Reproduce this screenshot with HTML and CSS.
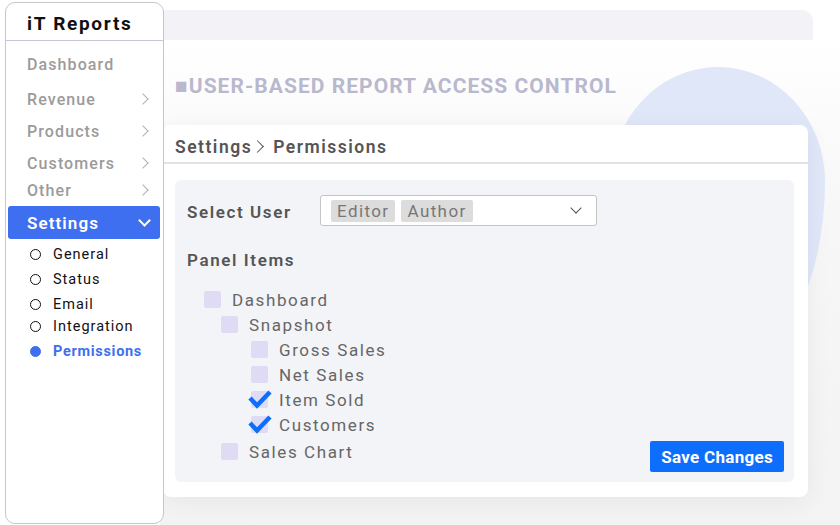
FILE: index.html
```html
<!DOCTYPE html>
<html>

<head>
    <title>iT Reports - Permissions</title>
    <link rel="stylesheet" href="styles.css">
</head>

<body>
    <div class="app">
        <aside class="sidebar">
            <div class="brand">iT Reports</div>
            <nav class="menu">
                <a class="menu-item m-dash">Dashboard</a>
                <a class="menu-item m-rev">Revenue <span class="chev"></span></a>
                <a class="menu-item m-prod">Products <span class="chev"></span></a>
                <a class="menu-item m-cust">Customers <span class="chev"></span></a>
                <a class="menu-item m-other">Other <span class="chev"></span></a>
                <a class="menu-item active">Settings <span class="chev down"></span></a>
                <ul class="submenu">
                    <li class="s-gen">General</li>
                    <li class="s-stat">Status</li>
                    <li class="s-mail">Email</li>
                    <li class="s-int">Integration</li>
                    <li class="s-perm current">Permissions</li>
                </ul>
            </nav>
        </aside>

        <main class="main">
            <div class="topbar"></div>
            <div class="stage">
                <div class="blob"></div>
                <h1 class="page-title">&#9632;USER-BASED REPORT ACCESS CONTROL</h1>

                <section class="card">
                    <div class="card-head">Settings<span class="crumb-sep"></span>Permissions</div>
                    <div class="panel">
                        <div class="field">
                            <label class="field-label">Select User</label>
                            <div class="select">
                                <span class="tag">Editor</span>
                                <span class="tag">Author</span>
                                <span class="select-caret"></span>
                            </div>
                        </div>

                        <h3 class="field-label items-title">Panel Items</h3>

                        <ul class="tree">
                            <li class="lvl0"><span class="box"></span>Dashboard</li>
                            <li class="lvl1"><span class="box"></span>Snapshot</li>
                            <li class="lvl2"><span class="box"></span>Gross Sales</li>
                            <li class="lvl2"><span class="box"></span>Net Sales</li>
                            <li class="lvl2"><span class="box">
                                <svg class="tick" width="23" height="19" viewBox="0 0 23 19"><polyline points="1,8 8,15.5 21,2" /></svg>
                            </span>Item Sold</li>
                            <li class="lvl2"><span class="box">
                                <svg class="tick" width="23" height="19" viewBox="0 0 23 19"><polyline points="1,8 8,15.5 21,2" /></svg>
                            </span>Customers</li>
                        </ul>
                        <div class="panel-foot">
                            <div class="tree-row lvl1"><span class="box"></span>Sales Chart</div>
                            <button class="save-btn">Save Changes</button>
                        </div>
                    </div>
                </section>
            </div>
        </main>
    </div>
</body>

</html>
```

FILE: styles.css
```css
* {
    box-sizing: border-box;
}

body {
    margin: 0;
    font-family: 'Roboto', sans-serif;
    background-color: #fff;
    color: #333;
    overflow: hidden;
}

.app {
    display: flex;
    height: 525px;
    padding-top: 2px;
}

/* sidebar */

.sidebar {
    position: relative;
    z-index: 2;
    width: 159px;
    height: 522px;
    margin-left: 5px;
    flex-shrink: 0;
    background-color: #fff;
    border: 1.5px solid #c6c6c8;
    border-radius: 10px;
}

.brand {
    height: 38px;
    padding: 9px 0 0 21px;
    font-size: 19px;
    font-weight: 700;
    letter-spacing: 1.7px;
    color: #111;
    border-bottom: 1.5px solid #c7c7d6;
}

.menu {
    display: flex;
    flex-direction: column;
}

.menu-item {
    display: flex;
    align-items: center;
    justify-content: space-between;
    height: 24px;
    padding: 0 14px 0 21px;
    font-size: 16px;
    font-weight: 500;
    letter-spacing: 1.1px;
    color: #9b9b9b;
}

.m-dash { margin-top: 11px; }
.m-rev { margin-top: 11px; }
.m-prod { margin-top: 8px; }
.m-cust { margin-top: 8px; }
.m-other { margin-top: 3px; }

.chev {
    width: 8px;
    height: 8px;
    border-right: 1.5px solid #b0b0b0;
    border-top: 1.5px solid #b0b0b0;
    transform: rotate(45deg);
    margin-right: 2px;
}

.menu-item.active {
    height: 33px;
    margin: 4px 3.5px 0 2px;
    padding: 0 7px 0 19px;
    background-color: #3e6ff1;
    border-radius: 3px;
    color: #fff;
    font-weight: 600;
    font-size: 17px;
}

.chev.down {
    width: 9px;
    height: 9px;
    border-color: #fff;
    border-width: 2px;
    transform: rotate(135deg);
    margin: -5px 4px 0 0;
}

.submenu {
    list-style: none;
    margin: 5px 0 0 0;
    padding: 0 0 0 24px;
}

.submenu li {
    display: flex;
    align-items: center;
    gap: 12px;
    height: 20px;
    font-size: 14.5px;
    font-weight: 400;
    letter-spacing: 1px;
    color: #111;
}

.submenu li::before {
    content: "";
    width: 9px;
    height: 9px;
    border: 1.6px solid #111;
    border-radius: 50%;
}

.submenu .s-stat { margin-top: 5px; }
.submenu .s-mail { margin-top: 5px; }
.submenu .s-int { margin-top: 2px; }
.submenu .s-perm { margin-top: 5px; }

.submenu li.current {
    color: #3e6ff1;
    font-weight: 700;
    letter-spacing: 0.7px;
}

.submenu li.current::before {
    background-color: #3e6ff1;
    border-color: #3e6ff1;
}

/* main area */

.main {
    flex: 1;
    margin-left: -4px;
    padding-top: 8px;
    display: flex;
    flex-direction: column;
}

.topbar {
    height: 30px;
    margin-right: 27px;
    background-color: #f3f3f7;
    border-top-right-radius: 11px;
}

.stage {
    position: relative;
    flex: 1;
    background: linear-gradient(180deg, #ffffff 0%, #f7f7f8 35%, #f3f3f4 100%);
}

.blob {
    position: absolute;
    left: 451px;
    top: 27px;
    width: 214px;
    height: 300px;
    background-color: #dfe7f8;
    border-radius: 50% 50% 45% 45% / 38% 38% 62% 62%;
}

.page-title {
    position: relative;
    margin: 34px 0 0 15px;
    font-size: 21px;
    font-weight: 700;
    letter-spacing: 1.05px;
    color: #b9b8cd;
}

.card {
    position: relative;
    width: 645px;
    margin: 27px 0 0 3px;
    background-color: #fff;
    border-radius: 8px;
    box-shadow: 0 4px 24px rgba(0, 0, 0, 0.06);
    padding-bottom: 15px;
}

.card-head {
    display: flex;
    align-items: center;
    height: 39px;
    padding: 6px 0 0 12px;
    font-size: 17.5px;
    font-weight: 600;
    letter-spacing: 1.5px;
    color: #555;
    border-bottom: 2px solid #e2e2e4;
}

.crumb-sep {
    width: 9px;
    height: 9px;
    margin: 0 11px 0 1px;
    border-right: 1.8px solid #555;
    border-top: 1.8px solid #555;
    transform: rotate(45deg);
}

.panel {
    margin: 16px 14px 0 12px;
    padding: 15px 10px 11px 12px;
    background-color: #f3f4f8;
    border-radius: 6px;
}

.field {
    display: flex;
    align-items: center;
}

.field-label {
    margin: 0;
    font-size: 17px;
    font-weight: 600;
    letter-spacing: 1.6px;
    color: #555;
}

.field .field-label {
    width: 133px;
    padding-top: 2px;
}

.select {
    display: flex;
    align-items: center;
    gap: 6px;
    width: 277px;
    height: 31px;
    padding: 0 10px;
    background-color: #fff;
    border: 1px solid #c4c4c4;
    border-radius: 3px;
}

.tag {
    padding: 1px 6px;
    background-color: #dcdcdc;
    border-radius: 2px;
    font-size: 17px;
    letter-spacing: 1.4px;
    color: #777;
}

.select-caret {
    width: 8px;
    height: 8px;
    margin: -5px 6px 0 auto;
    border-right: 1.8px solid #555;
    border-bottom: 1.8px solid #555;
    transform: rotate(45deg);
}

.items-title {
    margin-top: 24px;
}

.tree {
    list-style: none;
    margin: 17px 0 0 0;
    padding: 0;
}

.tree li,
.tree-row {
    display: flex;
    align-items: center;
    height: 25px;
    font-size: 17px;
    letter-spacing: 1.6px;
    color: #666;
}

.lvl0 { padding-left: 17px; }
.lvl1 { padding-left: 34px; }
.lvl2 { padding-left: 64px; }

.box {
    position: relative;
    width: 17px;
    height: 17px;
    margin-right: 11px;
    background-color: #dfdbf4;
    border-radius: 2px;
}

.tick {
    position: absolute;
    left: -2px;
    top: -1px;
    overflow: visible;
}

.tick polyline {
    fill: none;
    stroke: #0d6efd;
    stroke-width: 4.5;
}

.panel-foot {
    display: flex;
    justify-content: space-between;
    align-items: flex-end;
    margin-top: 2px;
}

.tree-row {
    height: 25px;
    margin-bottom: 7px;
}

.save-btn {
    height: 31px;
    margin-bottom: -1px;
    padding: 0 11px;
    border: none;
    border-radius: 2px;
    background-color: #0d6efd;
    color: #fff;
    font-family: inherit;
    font-size: 17px;
    font-weight: 700;
    letter-spacing: 0.3px;
}
```
